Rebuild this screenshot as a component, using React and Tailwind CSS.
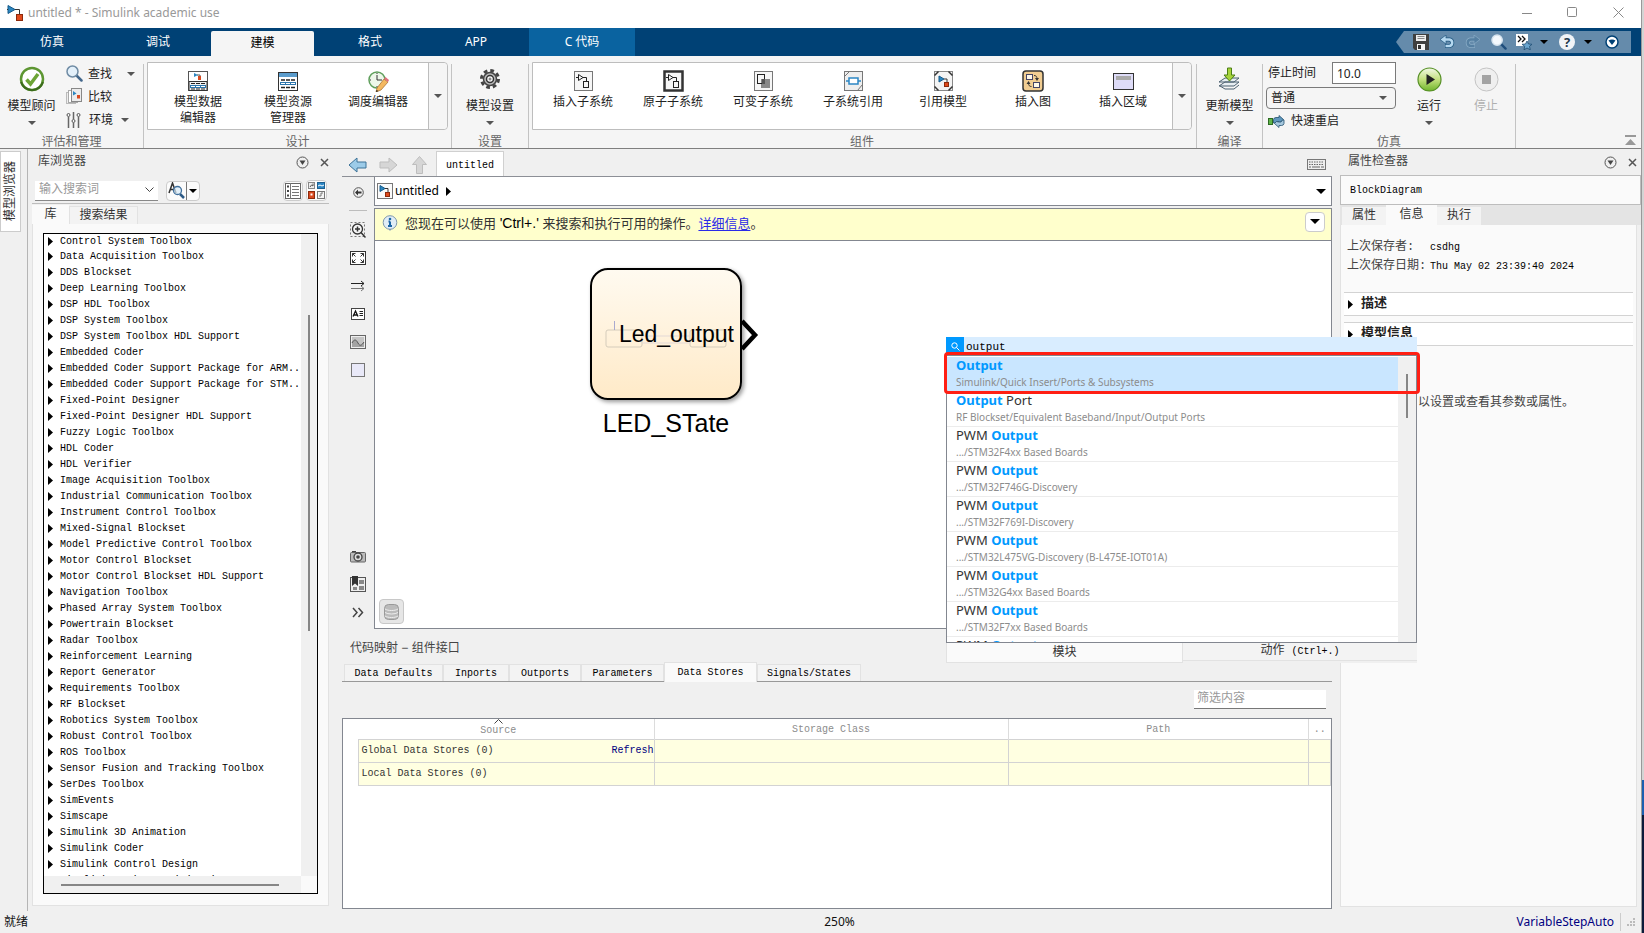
import { useState } from 'react';
import { clsx } from 'clsx';

const ribbonTabs = [
  { label: '仿真' },
  { label: '调试' },
  { label: '建模' },
  { label: '格式' },
  { label: 'APP' },
  { label: 'C 代码', context: true },
];

const toolboxes = [
  'Control System Toolbox',
  'Data Acquisition Toolbox',
  'DDS Blockset',
  'Deep Learning Toolbox',
  'DSP HDL Toolbox',
  'DSP System Toolbox',
  'DSP System Toolbox HDL Support',
  'Embedded Coder',
  'Embedded Coder Support Package for ARM..',
  'Embedded Coder Support Package for STM..',
  'Fixed-Point Designer',
  'Fixed-Point Designer HDL Support',
  'Fuzzy Logic Toolbox',
  'HDL Coder',
  'HDL Verifier',
  'Image Acquisition Toolbox',
  'Industrial Communication Toolbox',
  'Instrument Control Toolbox',
  'Mixed-Signal Blockset',
  'Model Predictive Control Toolbox',
  'Motor Control Blockset',
  'Motor Control Blockset HDL Support',
  'Navigation Toolbox',
  'Phased Array System Toolbox',
  'Powertrain Blockset',
  'Radar Toolbox',
  'Reinforcement Learning',
  'Report Generator',
  'Requirements Toolbox',
  'RF Blockset',
  'Robotics System Toolbox',
  'Robust Control Toolbox',
  'ROS Toolbox',
  'Sensor Fusion and Tracking Toolbox',
  'SerDes Toolbox',
  'SimEvents',
  'Simscape',
  'Simulink 3D Animation',
  'Simulink Coder',
  'Simulink Control Design',
  'Simulink Design Optimization',
];

const mappingTabs = [
  { label: 'Data Defaults', width: 'w-[99px]' },
  { label: 'Inports', width: 'w-[66px]' },
  { label: 'Outports', width: 'w-[72px]' },
  { label: 'Parameters', width: 'w-[83px]' },
  { label: 'Data Stores', width: 'w-[93px]' },
  { label: 'Signals/States', width: 'w-[104px]' },
];

const results = [
  { pre: '', post: '', path: 'Simulink/Quick Insert/Ports & Subsystems' },
  { pre: '', post: ' Port', path: 'RF Blockset/Equivalent Baseband/Input/Output Ports' },
  { pre: 'PWM ', post: '', path: '.../STM32F4xx Based Boards' },
  { pre: 'PWM ', post: '', path: '.../STM32F746G-Discovery' },
  { pre: 'PWM ', post: '', path: '.../STM32F769I-Discovery' },
  { pre: 'PWM ', post: '', path: '.../STM32L475VG-Discovery (B-L475E-IOT01A)' },
  { pre: 'PWM ', post: '', path: '.../STM32G4xx Based Boards' },
  { pre: 'PWM ', post: '', path: '.../STM32F7xx Based Boards' },
  { pre: 'PWM ', post: '', path: '' },
];

/* ---------- icons ---------- */

function Svg({ w = 20, h = w, children, className }) {
  return (
    <svg width={w} height={h} viewBox={`0 0 ${w} ${h}`} fill="none" className={clsx('shrink-0', className)} aria-hidden="true">
      {children}
    </svg>
  );
}

const Caret = ({ color = '#555', className }) => (
  <Svg w={8} h={4} className={className}>
    <path d="M0 0h8L4 4z" fill={color} />
  </Svg>
);

const BigCaret = ({ color = '#000' }) => (
  <Svg w={10} h={5}>
    <path d="M0 0h10L5 5z" fill={color} />
  </Svg>
);

const TreeArrow = ({ className }) => (
  <Svg w={5} h={9} className={className}>
    <path d="M0 0l5 4.500L0 9z" fill="#000" />
  </Svg>
);

const ModelIcon = () => (
  <Svg w={16}>
    <path d="M1 .5v8l7-4z" fill="#2b86c0" stroke="#155a8a" />
    <path d="M0 4.500h1M8 4.500h4.500v5" stroke="#333" />
    <rect x="9.500" y="9.500" width="6" height="6" fill="#e04a1c" stroke="#8c2a0c" />
  </Svg>
);

const SquareModelIcon = () => (
  <Svg w={16}>
    <rect x=".5" y=".5" width="15" height="15" fill="#fafafa" stroke="#777" />
    <path d="M3 2.500v6l5-3z" fill="#2b86c0" stroke="#155a8a" />
    <path d="M8 5.500h3v4" stroke="#333" />
    <rect x="8.500" y="9.500" width="4" height="4" fill="#e04a1c" stroke="#8c2a0c" />
  </Svg>
);

const CheckIcon = () => (
  <Svg w={26}>
    <circle cx="13" cy="13" r="11" fill="#fff" stroke="#5d9632" strokeWidth="2.500" />
    <path d="M2 16a11.500 11.500 0 0 0 22 0" stroke="#3b6b1c" strokeWidth="2" />
    <path d="M7.500 13.500l4 4.500 7.500-10" stroke="#6da536" strokeWidth="3.500" />
  </Svg>
);

const SearchIcon = ({ w = 17, light }) => (
  <svg width={w} height={w} viewBox="0 0 17 17" fill="none" className="shrink-0" aria-hidden="true">
    <path d="M10.500 10.500l5 5" stroke={light ? '#1f4e7c' : '#44688c'} strokeWidth="2.500" strokeLinecap="round" />
    <circle cx="6.500" cy="6.500" r="5.500" fill={light ? '#f4f9fd' : '#e3f0fa'} stroke={light ? '#d5e3ee' : '#6f8ba4'} strokeWidth="1.500" />
  </svg>
);

const CompareIcon = () => (
  <Svg w={17}>
    <rect x=".5" y="4.500" width="9" height="11" fill="#eee" stroke="#bbb" />
    <rect x="2.500" y="2.500" width="9" height="12" fill="#fff" stroke="#aaa" />
    <rect x="5.500" y=".5" width="10" height="13" fill="#ececec" stroke="#888" />
    <path d="M7 3v4.500l3.500-2z" fill="#2b86c0" />
    <rect x="11" y="7" width="3" height="3.500" fill="#d9491f" />
  </Svg>
);

const SlidersIcon = () => (
  <Svg w={15} h={16}>
    <path d="M2.500 5v11M7.500 0v7M7.500 11v5M12.500 5v11" stroke="#666" strokeWidth="1.500" />
    <circle cx="2.500" cy="3" r="1.500" stroke="#555" />
    <circle cx="7.500" cy="9" r="1.500" stroke="#555" />
    <circle cx="12.500" cy="3" r="1.500" stroke="#555" />
  </Svg>
);

const DataEditorIcon = () => (
  <Svg w={20}>
    <rect x=".5" y=".5" width="19" height="19" fill="#fff" stroke="#555" />
    <path d="M6 2v4l4-2z" fill="#2b86c0" />
    <path d="M9 4h3v2" stroke="#555" />
    <rect x="10" y="5" width="3" height="4" fill="#d9491f" />
    <path d="M1 10.500h18v9H1z" fill="#f2f2f2" stroke="#333" />
    <path d="M2 15.500h16" stroke="#2c76ad" strokeWidth="3" />
    <path d="M3 12.500h14M3 18h14" stroke="#222" strokeDasharray="4 1" />
    <path d="M3 15.500h14" stroke="#fff" strokeDasharray="4 1" />
  </Svg>
);

const ExplorerIcon = () => (
  <Svg w={20} h={19}>
    <rect x=".5" y=".5" width="19" height="18" fill="#fff" stroke="#333" />
    <rect x="1" y="1" width="18" height="4" fill="#5b9ccc" />
    <path d="M3 8h14M3 15.500h14" stroke="#222" strokeDasharray="4 1" strokeWidth="1.500" />
    <path d="M2 11.500h16" stroke="#2c76ad" strokeWidth="3" />
    <path d="M3 11.500h14" stroke="#fff" strokeDasharray="4 1" />
  </Svg>
);

const ScheduleIcon = () => (
  <Svg w={21}>
    <circle cx="9" cy="9" r="8" fill="#eef7ea" stroke="#5f9f5c" strokeWidth="1.500" />
    <path d="M9 4v5h5M9 2v1M2 9h1M9 15v1" stroke="#333" />
    <path d="M9 17l7-9 4 3-7 8-5 2z" fill="#f4b860" stroke="#a0692a" strokeWidth=".7" />
    <path d="M16 8l4 3 1-2-3.500-3z" fill="#e0707c" />
    <path d="M8.500 19l2 1-2.500 1z" fill="#222" />
  </Svg>
);

const GearIcon = () => (
  <Svg w={20}>
    <circle cx="10" cy="10" r="8.500" stroke="#444" strokeWidth="3" strokeDasharray="3.700 2.980" />
    <circle cx="10" cy="10" r="6.500" fill="#bbb" stroke="#444" strokeWidth="1.500" />
    <circle cx="10" cy="10" r="3.500" fill="#fff" stroke="#333" strokeWidth="1.500" />
    <circle cx="10" cy="10" r="1.500" fill="#888" />
  </Svg>
);

const SubsystemIcon = ({ bold }) => (
  <Svg w={21} h={22}>
    <rect x="1.500" y="1.500" width="18" height="19" fill="#f6f6f6" stroke={bold ? '#333' : '#777'} strokeWidth={bold ? 2.5 : 1} />
    <path d="M5.500 4.500v6l4.500-3zM3 7.500h2M10 7.500h3.500v4" stroke="#222" />
    <rect x="10.500" y="11.500" width="5" height="6" stroke="#222" />
  </Svg>
);

const VariantIcon = () => (
  <Svg w={21} h={22}>
    <rect x="1.500" y="1.500" width="18" height="19" fill="#f6f6f6" stroke="#777" />
    <rect x="8" y="9" width="9" height="9" fill="#888" />
    <rect x="4.500" y="4.500" width="7" height="9" stroke="#222" />
    <rect x="9" y="9" width="3" height="5" fill="#555" />
  </Svg>
);

const SubRefIcon = () => (
  <Svg w={21} h={22}>
    <rect x="1.500" y="1.500" width="18" height="19" fill="#eee" stroke="#777" />
    <path d="M1.500 6.500l5-5M14.500 20.500l5-6" stroke="#777" />
    <rect x="6" y="8" width="9" height="6" fill="#fff" stroke="#2c86c4" strokeWidth="1.500" />
    <path d="M3 11h3M15 11h3" stroke="#2c86c4" strokeWidth="1.500" />
  </Svg>
);

const ModelRefIcon = () => (
  <Svg w={21} h={22}>
    <rect x="1.500" y="1.500" width="18" height="19" fill="#f4f4f4" stroke="#888" />
    <path d="M1.500 5.500l4-4M15.500 1.500l4 4M1.500 16.500l4 4M15.500 20.500l4-4" stroke="#333" strokeWidth="1.500" />
    <path d="M6 6v6l5-3z" fill="#2b86c0" stroke="#155a8a" />
    <path d="M11 9h3v3" stroke="#333" />
    <rect x="11.500" y="12.500" width="4" height="4" fill="#e04a1c" stroke="#8c2a0c" />
  </Svg>
);

const ChartIcon = () => (
  <Svg w={22}>
    <rect x="1" y="1" width="20" height="20" rx="3" fill="#f1cd92" stroke="#333" strokeWidth="1.500" />
    <rect x="4.500" y="4.500" width="6" height="5" fill="#fff8e8" stroke="#446" />
    <rect x="11.500" y="12.500" width="6" height="5" fill="#fff8e8" stroke="#446" />
    <path d="M12 5.500c2 0 3 1 3 3.500M9.500 16.500c-2 0-3-1-3-3.500" stroke="#333" />
    <path d="M13 8h4l-2 3zM4.500 14h4l-2-3z" fill="#333" />
  </Svg>
);

const AreaIcon = () => (
  <Svg w={21} h={19}>
    <rect x=".5" y="1.500" width="20" height="16" fill="#dedcf8" stroke="#333" />
    <rect x="3" y="4" width="15" height="4" fill="#aaa" />
  </Svg>
);

const UpdateIcon = () => (
  <Svg w={23} h={24}>
    <path d="M1 19l6-4h14l-5 4zM1 15l6-4h14l-5 4z" fill="#e8eef2" stroke="#4b6070" />
    <path d="M2 19l5 3h9l5-4" stroke="#4b6070" />
    <path d="M9.500 1h4v7h3.500l-5.500 6L6 8h3.500z" fill="#a6d33c" stroke="#4c7f14" />
  </Svg>
);

const RestartIcon = () => (
  <Svg w={17} h={13}>
    <rect x=".5" y="3.500" width="4" height="6" fill="#5fb548" stroke="#2d6a22" />
    <path d="M5.500 8V4.500a2.500 2.500 0 0 1 2.500-2h3V.5l4.500 4-4.500 4v-2H8.500V8z" fill="#5f97bd" stroke="#24516f" strokeWidth=".8" />
    <path d="M16 5v3.500a2.500 2.500 0 0 1-2.500 2h-2.500v2l-4.500-4 2-2 2.500.5 2 0 1.500-2z" fill="#a6c8de" stroke="#24516f" strokeWidth=".8" />
  </Svg>
);

const RunIcon = () => (
  <Svg w={25}>
    <defs>
      <linearGradient id="run" x1="0" y1="0" x2="0" y2="1">
        <stop offset="0" stopColor="#f2f8e6" />
        <stop offset=".5" stopColor="#c3e07e" />
        <stop offset="1" stopColor="#6fb52c" />
      </linearGradient>
    </defs>
    <circle cx="12.500" cy="12.500" r="11.500" fill="url(#run)" stroke="#558f25" strokeWidth="1.200" />
    <path d="M9.500 7v11l8.500-5.500z" fill="#222" />
  </Svg>
);

const StopIcon = () => (
  <Svg w={25}>
    <circle cx="12.500" cy="12.500" r="11.500" fill="#efefef" stroke="#c4c4c4" />
    <rect x="8" y="8" width="9" height="9" fill="#a3a3a3" />
  </Svg>
);

const CircleDown = () => (
  <Svg w={13}>
    <circle cx="6.500" cy="6.500" r="5.500" stroke="#555" />
    <path d="M3.500 4.500h6l-3 4.500z" fill="#444" />
  </Svg>
);

const CrossIcon = () => (
  <Svg w={9}>
    <path d="M1 1l7 7M8 1L1 8" stroke="#555" strokeWidth="1.500" />
  </Svg>
);

const BlockArrow = ({ dir, active }) => (
  <svg width="19" height="16" viewBox="0 0 19 16" className={clsx('shrink-0', dir === 'right' && 'rotate-180', dir === 'up' && 'rotate-90')} aria-hidden="true">
    <path d="M1 8l8-7v4h9v6H9v4z" fill={active ? '#9ccbe8' : '#d6d6d6'} stroke={active ? '#3c7298' : '#bdbdbd'} />
  </svg>
);

const KeyboardIcon = () => (
  <Svg w={19} h={11}>
    <rect x=".5" y=".5" width="18" height="10" fill="#eee" stroke="#777" />
    <path d="M2 3h15M2 5.500h15" stroke="#666" strokeDasharray="1.500 1" />
    <path d="M2 8h2M5 8h8M14 8h3" stroke="#666" />
  </Svg>
);

const FindIcon = () => (
  <Svg w={17} h={17}>
    <path d="M1 11L4.500 1 8 11M2 7.500h5" stroke="#333" strokeWidth="1.500" />
    <path d="M12 12l4 4" stroke="#2c5a86" strokeWidth="2.500" />
    <circle cx="9.500" cy="8.500" r="4" fill="#d8ebf8" fillOpacity=".7" stroke="#3f6f9c" strokeWidth="1.300" />
  </Svg>
);

const ListIcon = () => (
  <Svg w={16}>
    <rect x=".5" y=".5" width="15" height="15" fill="#fff" stroke="#666" />
    <path d="M5.500 0v16M7 3.500h7M7 6.500h7M7 9.500h7M7 12.500h7" stroke="#777" />
    <path d="M2 3.500h2M2 8h2M2 12.500h2" stroke="#444" strokeWidth="2" />
  </Svg>
);

const GridIcon = () => (
  <Svg w={17}>
    <rect x=".5" y=".5" width="6" height="6" fill="#eee" stroke="#888" />
    <path d="M2 5l1.500-2 1.500 1V1.500" stroke="#555" />
    <rect x="9.500" y=".5" width="7" height="6" fill="#2c86c4" stroke="#1d5f8f" />
    <path d="M10 4l2-1 2 1 2-1" stroke="#fff" />
    <rect x=".5" y="9.500" width="6" height="7" fill="#d9491f" stroke="#8c2a0c" />
    <rect x="2.500" y="11.500" width="2" height="2" fill="#fff" />
    <rect x="9.500" y="9.500" width="7" height="7" fill="#f4f4f4" stroke="#777" />
    <path d="M11 14h2v-3h2" stroke="#777" />
  </Svg>
);

const InfoIcon = () => (
  <Svg w={16}>
    <path d="M6 13l2 3 2-3z" fill="#7a98b4" />
    <circle cx="8" cy="7.500" r="6.800" fill="#e1edf6" stroke="#7d97ad" />
    <path d="M8 6.500V11M6 11h4M6.500 6.500H8" stroke="#1c66a6" strokeWidth="2" />
    <circle cx="8" cy="4" r="1.300" fill="#1c66a6" />
  </Svg>
);

const paletteTop = [
  {
    name: 'Zoom',
    icon: (
      <Svg w={16}>
        <rect x=".5" y=".5" width="14" height="14" stroke="#777" strokeDasharray="2 2" />
        <circle cx="7.500" cy="7" r="5" fill="#f5f5f5" stroke="#333" strokeWidth="1.300" />
        <path d="M5 7h5M7.500 4.500v5M11 10.500l4.500 5" stroke="#333" strokeWidth="1.500" />
      </Svg>
    ),
  },
  {
    name: 'Fit to view',
    icon: (
      <Svg w={16} h={14}>
        <rect x=".5" y=".5" width="15" height="13" fill="#fff" stroke="#333" />
        <path d="M2.500 5.500v-3h3M2.500 2.500l3 3M10.500 2.500h3v3M13.500 2.500l-3 3M2.500 8.500v3h3M2.500 11.500l3-3M13.500 8.500v3h-3M13.500 11.500l-3-3" stroke="#333" />
      </Svg>
    ),
  },
  {
    name: 'Signals',
    icon: (
      <Svg w={16} h={12}>
        <path d="M1 3.500h13M11 1l3 2.500L11 6" stroke="#222" />
        <path d="M1 8.500h13M11 6l3 2.500-3 2.500" stroke="#777" />
      </Svg>
    ),
  },
  {
    name: 'Annotation',
    icon: (
      <Svg w={14} h={12}>
        <rect x=".5" y=".5" width="13" height="11" fill="#fff" stroke="#444" />
        <path d="M2 8.500L4.500 3 7 8.500M3 7h3" stroke="#111" strokeWidth="1.300" />
        <path d="M8.500 3.500h3.500M8.500 5.500h3.500M8.500 7.500h3.500" stroke="#222" />
      </Svg>
    ),
  },
  {
    name: 'Image',
    icon: (
      <Svg w={16} h={14}>
        <rect x=".5" y=".5" width="15" height="13" fill="#eee" stroke="#666" />
        <rect x="2" y="2" width="12" height="10" fill="#c4c4c4" />
        <path d="M2 8c2-4 4-4 6 0s4 2 6-1v5H2z" fill="#a4a4a4" />
        <path d="M2 8c2-4 4-4 6 0s4 2 6-1" stroke="#555" />
      </Svg>
    ),
  },
  {
    name: 'Area',
    icon: (
      <Svg w={14}>
        <rect x=".5" y=".5" width="13" height="13" fill="#e9e9f8" stroke="#777" />
      </Svg>
    ),
  },
];

const paletteBottom = [
  {
    name: 'Screenshot',
    icon: (
      <Svg w={16} h={13}>
        <rect x=".5" y="2.500" width="15" height="9.500" rx="1" fill="#bbb" stroke="#666" />
        <path d="M2 1.500h4" stroke="#444" />
        <circle cx="8" cy="7" r="4" fill="#ddd" stroke="#444" strokeWidth="1.300" />
        <circle cx="8" cy="7" r="1.800" fill="#444" />
      </Svg>
    ),
  },
  {
    name: 'Viewmarks',
    icon: (
      <Svg w={16}>
        <rect x=".5" y="1.500" width="15" height="14" fill="#eee" stroke="#555" />
        <path d="M2 0h6v10L5 7.500 2 10z" fill="#333" />
        <path d="M9 4h5v4H9zM9 10h5v4H9zM3 11h4v3H3z" fill="#888" />
      </Svg>
    ),
  },
  {
    name: 'More',
    icon: (
      <Svg w={12} h={11}>
        <path d="M1 1l4 4.500L1 10M6.500 1l4 4.500-4 4.500" stroke="#444" strokeWidth="1.500" />
      </Svg>
    ),
  },
];

/* ---------- ribbon ---------- */

function TitleBar() {
  return (
    <header className="flex h-7 shrink-0 items-center bg-white pb-[3px] pl-[7px] text-xs text-[#999]">
      <ModelIcon />
      <h1 className="flex-1 pl-[5px]">untitled * - Simulink academic use</h1>
      <button aria-label="Minimize" className="flex w-11 justify-center">
        <Svg w={11}><path d="M0 6.500h10" stroke="#888" /></Svg>
      </button>
      <button aria-label="Maximize" className="flex w-[46px] justify-center">
        <Svg w={11}><rect x=".5" y=".5" width="9" height="9" rx="1" stroke="#888" /></Svg>
      </button>
      <button aria-label="Close" className="flex w-[46px] justify-center">
        <Svg w={11}><path d="M.5.5l10 10M10.500.5l-10 10" stroke="#888" /></Svg>
      </button>
    </header>
  );
}

function QuickAccess() {
  return (
    <div className="mr-[10px] flex h-[22px] items-center bg-[#658bab] pr-3 pl-[17px] [clip-path:polygon(8px_0,100%_0,100%_100%,8px_100%,0_50%)]">
      <button aria-label="Save" className="w-[27px]">
        <Svg w={16}>
          <path d="M0 0h16v16H2l-2-2z" fill="#3f3f3f" />
          <path d="M3 1h10v6H3z" fill="#eee" />
          <path d="M4.500 2.500h7M4.500 4.500h7" stroke="#888" />
          <path d="M4 10h8v6H4z" fill="#f5f5f5" />
          <path d="M5 11h3v4H5z" fill="#333" />
        </Svg>
      </button>
      <button aria-label="Undo" className="w-[25px]">
        <Svg w={15} h={14}>
          <path d="M4 4.500h5.500a3.300 3.300 0 0 1 0 6.500H5" stroke="#1f567f" strokeWidth="4" />
          <path d="M6 0v9L0 4.500z" fill="#b5d8ef" stroke="#1f567f" strokeWidth=".7" />
          <path d="M4 4.500h5.500a3.300 3.300 0 0 1 0 6.500H5.500" stroke="#b5d8ef" strokeWidth="2.500" />
        </Svg>
      </button>
      <button aria-label="Redo" className="w-[26px]">
        <Svg w={15} h={14}>
          <path d="M11 4.500H5.500a3.300 3.300 0 0 0 0 6.500H10" stroke="#8badc7" strokeWidth="4" />
          <path d="M9 0v9l6-4.500z" fill="#5680a2" stroke="#8badc7" strokeWidth=".7" />
          <path d="M11 4.500H5.500a3.300 3.300 0 0 0 0 6.500H9.500" stroke="#5680a2" strokeWidth="2.500" />
        </Svg>
      </button>
      <button aria-label="Find" className="w-[25px]">
        <SearchIcon w={16} light />
      </button>
      <button aria-label="Favorites" className="flex w-[43px] items-center gap-2">
        <Svg w={16}>
          <rect x="0" y="0" width="12" height="12" fill="#fff" />
          <path d="M2 2l3 3-3 3M6 2l3 3-3 3" stroke="#111" strokeWidth="1.300" />
          <path d="M11 7l1.500 3 3.500.3-2.500 2 .8 3.500-3.300-1.800-3 1.800.7-3.500L6 10.300l3.500-.3z" fill="#6aa6d0" stroke="#214e72" strokeWidth=".8" />
        </Svg>
        <Caret color="#000" />
      </button>
      <button aria-label="Help" className="flex w-[46px] items-center gap-[9px]">
        <span className="flex size-4 items-center justify-center rounded-full bg-[#f1f4f7] text-[13px] leading-4 font-bold text-[#24394d]">?</span>
        <Caret color="#000" />
      </button>
      <button aria-label="Options">
        <Svg w={14}>
          <circle cx="7" cy="7" r="6" fill="#fff" stroke="#004175" strokeWidth="1.500" />
          <path d="M3.500 5.500c2-1.500 5-1.500 7 0L7 10z" fill="#004175" />
        </Svg>
      </button>
    </div>
  );
}

function RibbonTabs({ active, onSelect }) {
  return (
    <nav className="flex h-7 shrink-0 items-end justify-between bg-[#004175]">
      <div className="-ml-px flex items-end">
        {ribbonTabs.map((t) => (
          <button
            key={t.label}
            onClick={() => onSelect(t.label)}
            className={clsx(
              'text-center text-xs',
              active === t.label ? 'mr-[3px] h-[25px] w-[103px] rounded-t-xs bg-[#f5f5f5] pb-[2px] text-black' : 'h-7 w-[106px] text-white',
              t.context && 'bg-[#0a63a0]',
            )}
          >
            {t.label}
          </button>
        ))}
      </div>
      <div className="flex h-7 items-center">
        <QuickAccess />
      </div>
    </nav>
  );
}

function Section({ title, className, children }) {
  return (
    <section className={clsx('mt-2 flex h-[84px] shrink-0 flex-col justify-between border-r border-[#c3c3c3]', className)}>
      <div className="-mt-2 flex h-[75px] pt-[6px]">{children}</div>
      <h2 className="text-center text-xs leading-3 text-[#666]">{title}</h2>
    </section>
  );
}

function BigButton({ icon, label, caret, disabled, className }) {
  return (
    <button disabled={disabled} className={clsx('flex shrink-0 flex-col items-center justify-start pt-[3px] text-xs', className)}>
      <span className="flex h-7 items-center justify-center">{icon}</span>
      <span className={clsx('mt-[5px] leading-4', disabled ? 'text-[#b0b0b0]' : 'text-[#222]')}>{label}</span>
      {caret && <Caret className="mt-[7px]" />}
    </button>
  );
}

function GalleryItem({ icon, lines }) {
  return (
    <button className="flex w-[90px] shrink-0 flex-col items-center justify-start pt-[7px] text-xs leading-4 text-[#222]">
      <span className="flex h-[22px] items-center">{icon}</span>
      <span className="pt-[2px]">
        {lines.map((l) => (
          <span key={l} className="block">{l}</span>
        ))}
      </span>
    </button>
  );
}

function Gallery({ children }) {
  return (
    <div className="flex h-[68px] flex-1 rounded-r-sm border border-[#bdbdbd] bg-white">
      <div className="flex flex-1 pl-[5px]">{children}</div>
      <button aria-label="Show more" className="flex w-[19px] items-center justify-center rounded-r-sm border-l border-[#bdbdbd] bg-[#f5f5f5]">
        <Caret />
      </button>
    </div>
  );
}

function Ribbon() {
  return (
    <div className="flex h-[93px] shrink-0 border-b border-[#7f7f7f] bg-[#f5f5f5]">
      <Section title="评估和管理" className="w-[144px]">
        <BigButton icon={<CheckIcon />} label="模型顾问" caret className="w-[63px]" />
        <div className="flex flex-1 flex-col text-xs text-[#222]">
          <button className="flex h-6 items-center gap-[5px] pl-[3px]">
            <SearchIcon />
            查找
            <Caret className="ml-[10px]" />
          </button>
          <button className="flex h-6 items-center gap-[5px] pl-[3px]">
            <CompareIcon />
            比较
          </button>
          <button className="flex h-6 items-center gap-2 pl-[3px]">
            <SlidersIcon />
            环境
            <Caret />
          </button>
        </div>
      </Section>
      <Section title="设计" className="w-[308px] pr-[3px] pl-[3px]">
        <Gallery>
          <GalleryItem icon={<DataEditorIcon />} lines={['模型数据', '编辑器']} />
          <GalleryItem icon={<ExplorerIcon />} lines={['模型资源', '管理器']} />
          <GalleryItem icon={<ScheduleIcon />} lines={['调度编辑器']} />
        </Gallery>
      </Section>
      <Section title="设置" className="w-[77px]">
        <BigButton icon={<GearIcon />} label="模型设置" caret className="w-full" />
      </Section>
      <Section title="组件" className="w-[668px] pr-[4px] pl-[3px]">
        <Gallery>
          <GalleryItem icon={<SubsystemIcon />} lines={['插入子系统']} />
          <GalleryItem icon={<SubsystemIcon bold />} lines={['原子子系统']} />
          <GalleryItem icon={<VariantIcon />} lines={['可变子系统']} />
          <GalleryItem icon={<SubRefIcon />} lines={['子系统引用']} />
          <GalleryItem icon={<ModelRefIcon />} lines={['引用模型']} />
          <GalleryItem icon={<ChartIcon />} lines={['插入图']} />
          <GalleryItem icon={<AreaIcon />} lines={['插入区域']} />
        </Gallery>
      </Section>
      <Section title="编译" className="w-[66px]">
        <BigButton icon={<UpdateIcon />} label="更新模型" caret className="w-full" />
      </Section>
      <Section title="仿真" className="w-[253px]">
        <div className="flex w-[135px] flex-col pl-[3px] text-xs text-[#222]">
          <div className="flex h-[22px] items-center justify-between">
            <label htmlFor="stop-time" className="pl-[2px]">停止时间</label>
            <input id="stop-time" defaultValue="10.0" className="h-[22px] w-16 border border-[#7a7a7a] bg-white px-1 text-xs" />
          </div>
          <div className="relative mt-[3px] flex items-center">
            <select aria-label="仿真模式" className="h-[22px] w-full appearance-none rounded-sm border border-[#7a7a7a] bg-[#f5f5f5] px-1">
              <option>普通</option>
            </select>
            <Caret className="pointer-events-none absolute right-[9px]" />
          </div>
          <button className="mt-[2px] flex h-[26px] items-center gap-[6px] pl-[2px]">
            <RestartIcon />
            快速重启
          </button>
        </div>
        <BigButton icon={<RunIcon />} label="运行" caret className="ml-[5px] w-[56px]" />
        <BigButton icon={<StopIcon />} label="停止" disabled className="w-[58px]" />
      </Section>
      <div className="flex flex-1 items-end justify-end pr-[5px] pb-[3px]">
        <button aria-label="Collapse">
          <Svg w={11} h={10}><path d="M0 0h11v2H0zM0 10h11L5.500 4z" fill="#999" /></Svg>
        </button>
      </div>
    </div>
  );
}

/* ---------- side panels ---------- */

function PanelTitle({ children, className }) {
  return (
    <div className={clsx('flex h-[26px] shrink-0 items-center gap-[11px] text-xs text-[#444]', className)}>
      <h2 className="flex-1">{children}</h2>
      <button aria-label="Panel menu"><CircleDown /></button>
      <button aria-label="Close panel"><CrossIcon /></button>
    </div>
  );
}

function LibraryBrowser() {
  return (
    <aside className="flex w-[301px] shrink-0 flex-col pb-[5px] pl-1">
      <PanelTitle className="pl-[6px]">库浏览器</PanelTitle>
      <div className="mt-[2px] flex h-[27px] shrink-0 items-center border-b border-[#bdbdbd] pt-px pr-[2px] pl-[3px]">
        <div className="flex h-5 w-[123px] items-center border-b border-[#888] bg-white pr-1">
          <input aria-label="输入搜索词" placeholder="输入搜索词" className="w-full min-w-0 px-1 text-xs placeholder:text-[#999]" />
          <Svg w={9} h={6}><path d="M.5.5l4 4 4-4" stroke="#444" /></Svg>
        </div>
        <div className="ml-2 flex h-5 items-center rounded-sm border border-[#ccc] bg-[#fbfbfb]">
          <button aria-label="Search options" className="px-px"><FindIcon /></button>
          <button aria-label="Search menu" className="flex h-full items-center border-l border-[#777] px-[2px]"><Caret color="#000" /></button>
        </div>
        <button aria-label="List view" className="ml-auto rounded-sm border border-[#ccc] bg-[#fbfbfb] p-px"><ListIcon /></button>
        <button aria-label="Grid view" className="ml-[3px] rounded-sm border border-[#ccc] bg-[#fbfbfb] p-px"><GridIcon /></button>
      </div>
      <div className="flex h-5 shrink-0 items-end text-xs text-[#333]">
        <button className="h-[19px] w-[37px] bg-[#fafafa]">库</button>
        <button className="h-[18px] w-[69px] border border-b-0 border-[#e2e2e2] bg-[#f3f3f3]">搜索结果</button>
      </div>
      <div className="flex min-h-0 flex-1 flex-col border border-t-0 border-[#e2e2e2] bg-[#fafafa] px-[10px] pt-[9px] pb-[11px]">
        <div className="flex min-h-0 flex-1 flex-col border border-black bg-white">
          <div className="flex min-h-0 flex-1">
            <ul className="min-h-0 flex-1 overflow-hidden">
              {toolboxes.map((t) => (
                <li key={t} className="flex h-4 items-center gap-[7px] overflow-hidden pl-1 text-[10px] leading-4 whitespace-nowrap first:h-[15px]">
                  <TreeArrow className="mb-px" />
                  {t}
                </li>
              ))}
            </ul>
            <div className="flex w-4 justify-center bg-[#f0f0f0]">
              <div className="mt-[81px] h-[316px] w-[2px] bg-[#868686]" />
            </div>
          </div>
          <div className="flex h-[17px] shrink-0 items-center">
            <div className="flex h-full flex-1 items-center bg-[#f0f0f0] pl-[17px]">
              <div className="h-[2px] w-[218px] bg-[#868686]" />
            </div>
            <div className="h-full w-4 bg-[#fafafa]" />
          </div>
        </div>
      </div>
    </aside>
  );
}

function InfoSection({ title }) {
  return (
    <button className="flex h-6 w-full items-center gap-2 border-y border-[#d3d3d3] bg-white pl-1 text-[13px] font-bold text-[#222]">
      <TreeArrow />
      {title}
    </button>
  );
}

function PropertyInspector() {
  return (
    <aside className="flex w-[301px] shrink-0 flex-col pb-1">
      <PanelTitle className="pr-1 pl-2">属性检查器</PanelTitle>
      <div className="flex h-[30px] shrink-0 items-center border border-[#bdbdbd] bg-[#fafafa] pl-[9px] text-[10px]">BlockDiagram</div>
      <div className="flex h-5 shrink-0 items-end bg-[#e4e4e4] pl-[2px] text-xs text-[#333]">
        <button className="h-[18px] w-11 bg-[#f3f3f3]">属性</button>
        <button className="h-5 w-[51px] bg-[#fafafa]">信息</button>
        <button className="h-[18px] w-11 bg-[#f3f3f3]">执行</button>
      </div>
      <div className="mr-1 flex-1 border border-t-0 border-[#e2e2e2] bg-[#fafafa] px-[3px] pt-[13px]">
        <dl className="grid grid-cols-[83px_1fr] pl-[3px] text-[10px] leading-[19px]">
          <dt className="text-xs leading-[19px] whitespace-nowrap text-[#444]">上次保存者:</dt>
          <dd>csdhg</dd>
          <dt className="text-xs leading-[19px] whitespace-nowrap text-[#444]">上次保存日期:</dt>
          <dd>Thu May 02 23:39:40 2024</dd>
        </dl>
        <div className="mt-4 flex flex-col gap-[6px]">
          <InfoSection title="描述" />
          <InfoSection title="模型信息" />
        </div>
        <p className="mt-[49px] pr-[59px] text-right text-xs text-[#444]">以设置或查看其参数或属性。</p>
      </div>
    </aside>
  );
}

/* ---------- editor ---------- */

function Palette() {
  return (
    <div className="flex w-8 shrink-0 flex-col items-center pb-[3px]">
      <button aria-label="Hide browser" className="flex h-[30px] items-center">
        <Svg w={11}>
          <circle cx="5.500" cy="5.500" r="4.800" stroke="#555" />
          <path d="M2 5.500l3-3v2h3.500v2H5v2z" fill="#333" />
        </Svg>
      </button>
      <div className="mt-[3px] mb-[5px] h-px w-[18px] bg-[#bdbdbd]" />
      {paletteTop.map((p) => (
        <button key={p.name} aria-label={p.name} className="flex h-7 items-center">{p.icon}</button>
      ))}
      <div className="flex-1" />
      {paletteBottom.map((p) => (
        <button key={p.name} aria-label={p.name} className="flex h-7 items-center">{p.icon}</button>
      ))}
    </div>
  );
}

function ModelBlock() {
  return (
    <figure className="absolute top-[27px] left-[215px] flex flex-col items-center font-[Arial,'Liberation_Sans',sans-serif] text-black">
      <div className="relative flex h-[132px] w-[152px] items-center justify-end rounded-[18px] border-2 border-black bg-linear-to-b from-[#fffaf0] to-[#ffeac8] pr-[6px] shadow-[2px_2px_4px_rgba(0,0,0,0.4)]">
        <Svg w={122} h={28} className="absolute top-[50px] left-[13px]">
          <rect x="1" y="10" width="36" height="17" rx="2" stroke="#d5ccbb" />
          <rect x="85" y="10" width="36" height="17" rx="2" stroke="#d5ccbb" />
          <path d="M37 16h48M37 23h48" stroke="#e3d9d6" />
          <path d="M9.500 1v9" stroke="#a9a9cf" />
        </Svg>
        <span className="relative text-[23px] leading-7">Led_output</span>
        <Svg w={18} h={32} className="absolute top-[49px] left-[149px]">
          <path d="M1 2l13 14L1 30" stroke="#000" strokeWidth="4.500" />
        </Svg>
      </div>
      <figcaption className="mt-[9px] text-[25px] leading-7">LED_STate</figcaption>
    </figure>
  );
}

function Editor() {
  return (
    <div className="flex min-h-0 flex-1 flex-col">
      <div className="flex h-7 shrink-0 items-end border-b border-[#8c8f96] pl-[6px]">
        <div className="flex h-[22px] items-center gap-3 pr-[7px]">
          <button aria-label="Back"><BlockArrow active /></button>
          <button aria-label="Forward"><BlockArrow dir="right" /></button>
          <button aria-label="Up"><BlockArrow dir="up" /></button>
        </div>
        <button className="h-[25px] w-[68px] border border-b-0 border-[#d0d0d0] bg-white pt-[2px] text-[10px]">untitled</button>
        <button aria-label="Keyboard" className="mr-[6px] mb-[6px] ml-auto"><KeyboardIcon /></button>
      </div>
      <div className="flex min-h-0 flex-1">
        <Palette />
        <div className="flex min-w-0 flex-1 flex-col">
          <div className="flex h-[29px] shrink-0 items-center border border-t-0 border-[#838790] bg-white pr-[5px] pl-[2px]">
            <SquareModelIcon />
            <span className="pr-[7px] pl-[2px] font-['Noto_Sans','Noto_Sans_CJK_SC',sans-serif] text-xs">untitled</span>
            <TreeArrow />
            <button aria-label="History" className="ml-auto"><BigCaret /></button>
          </div>
          <div className="mt-[2px] flex h-[33px] shrink-0 items-center border border-[#838790] bg-[#ffffcc] pr-[6px] pb-[3px] pl-[7px] text-[13px] leading-5 text-[#333]">
            <InfoIcon />
            <p className="flex-1 pl-[7px] font-['Liberation_Sans','Noto_Sans_CJK_SC',sans-serif]">
              您现在可以使用 <span className="text-[14px] text-black">'Ctrl+.'</span> 来搜索和执行可用的操作。
              <a href="#details" className="text-[#2a2ae8] underline underline-offset-2">详细信息</a>。
            </p>
            <button aria-label="Dismiss" className="mb-[3px] flex size-5 items-center justify-center rounded-sm border border-[#ccc] bg-white"><BigCaret /></button>
          </div>
          <div className="relative min-h-0 flex-1 border border-t-0 border-[#838790] bg-white">
            <ModelBlock />
            <button aria-label="Data" className="absolute bottom-1 left-1 flex size-[25px] items-center justify-center rounded-sm border border-[#c8c8c8] bg-[#e6e6e6]">
              <Svg w={15} h={16}>
                <rect x=".5" y=".5" width="14" height="15" rx="4" fill="#bbb" stroke="#999" />
                <path d="M1 5c3 2 10 2 13 0M1 8.500c3 2 10 2 13 0M1 12c3 2 10 2 13 0" stroke="#eee" />
              </Svg>
            </button>
          </div>
        </div>
      </div>
    </div>
  );
}

function CodeMappings() {
  const [tab, setTab] = useState('Data Stores');
  return (
    <section className="flex h-[280px] shrink-0 flex-col">
      <h2 className="pt-[10px] pl-2 text-xs leading-[18px] text-[#444]">
        代码映射<span className="font-['Liberation_Sans',sans-serif]"> − </span>组件接口
      </h2>
      <div className="mt-1 flex h-5 shrink-0 items-end border-b border-[#999] pl-[2px] text-[10px]">
        {mappingTabs.map((t) => (
          <button
            key={t.label}
            onClick={() => setTab(t.label)}
            className={clsx(
              'border border-b-0 border-[#e2e2e2]',
              t.width,
              tab === t.label ? '-mb-px h-5 bg-[#fafafa]' : 'h-[17px] bg-[#f3f3f3] pt-px',
            )}
          >
            {t.label}
          </button>
        ))}
      </div>
      <div className="flex h-9 shrink-0 items-center justify-end pr-[6px] pb-[2px]">
        <input aria-label="筛选内容" placeholder="筛选内容" className="h-[19px] w-[132px] border-b border-[#777] bg-white px-[3px] text-xs placeholder:text-[#999]" />
      </div>
      <div className="flex-1 border border-[#838790] bg-white">
        <table className="w-full table-fixed border-collapse text-[10px] text-[#333]">
          <colgroup>
            <col className="w-[15px]" />
            <col className="w-[296px]" />
            <col className="w-[354px]" />
            <col />
            <col className="w-[22px]" />
          </colgroup>
          <thead>
            <tr className="h-5 text-[#8c8c8c]">
              <th colSpan={2} scope="col" className="border-r border-[#dcdcdc] p-0 font-normal">
                <span className="flex flex-col items-center">
                  <Svg w={9} h={5}><path d="M.5 4.500l4-4 4 4" stroke="#444" /></Svg>
                  <span className="leading-[14px]">Source</span>
                </span>
              </th>
              <th scope="col" className="border-r border-[#dcdcdc] p-0 pt-[2px] font-normal">Storage Class</th>
              <th scope="col" className="border-r border-[#dcdcdc] p-0 pt-[2px] font-normal">Path</th>
              <th scope="col" className="p-0 pt-[2px] font-normal">..</th>
            </tr>
          </thead>
          <tbody>
            {['Global Data Stores (0)', 'Local Data Stores (0)'].map((name, i) => (
              <tr key={name} className="h-[23px]">
                <td />
                <td className="border border-[#d3d3d3] bg-[#ffffe1] p-0 pl-[3px]">
                  <span className="flex justify-between">
                    {name}
                    {i === 0 && <a href="#refresh" className="text-[#000080]">Refresh</a>}
                  </span>
                </td>
                <td className="border border-[#d3d3d3] bg-[#ffffe1]" />
                <td className="border border-[#d3d3d3] bg-[#ffffe1]" />
                <td className="border border-[#d3d3d3] bg-[#ffffe1]" />
              </tr>
            ))}
          </tbody>
        </table>
      </div>
    </section>
  );
}

function QuickInsert() {
  const [query, setQuery] = useState('output');
  return (
    <div className="absolute top-[188px] left-[946px] w-[471px]">
      <div className="flex h-[18px] items-center bg-[#d9edff]">
        <span className="flex h-full w-[18px] items-center justify-center bg-[#0099ff]">
          <Svg w={9}><path d="M5.500 5.500l3 3" stroke="#fff" /><circle cx="3.500" cy="3.500" r="2.700" stroke="#fff" /></Svg>
        </span>
        <input
          aria-label="Quick insert"
          value={query}
          onChange={(e) => setQuery(e.target.value)}
          className="h-full flex-1 px-[2px] pt-[2px] text-[11px]"
        />
      </div>
      <div className="flex h-[288px] border border-[#838790] bg-white pt-px">
        <ul className="flex-1 overflow-hidden font-['Noto_Sans',sans-serif]">
          {results.map((r, i) => (
            <li
              key={i}
              className={clsx('h-[35px] border-b border-[#ececec] pl-[9px]', i === 0 && 'bg-[#c9e6ff]')}
            >
              <div className="text-[13px] leading-4 text-[#333]">
                {r.pre}
                <b className="text-[#0099ff]">Output</b>
                {r.post}
              </div>
              <div className="text-[10px] leading-[18px] text-[#8c8c8c]">{r.path}</div>
            </li>
          ))}
        </ul>
        <div className="flex w-[18px] justify-center bg-[#f0f0f0]">
          <div className="mt-[17px] h-11 w-[2px] bg-[#868686]" />
        </div>
      </div>
      <div className="flex h-5 bg-[#f0f0f0] text-xs text-[#333]">
        <button className="w-[237px] border border-t-0 border-[#e2e2e2] bg-[#fafafa] leading-[18px]">模块</button>
        <button className="h-[18px] flex-1 border-b border-[#e2e2e2] bg-[#f3f3f3] leading-[17px]">
          动作 <span className="text-[10px] text-black">(Ctrl+.)</span>
        </button>
      </div>
      {/* highlight round the first hit */}
      <div className="pointer-events-none absolute top-[15px] -right-[3px] -left-[2px] h-[42px] rounded-sm border-[3px] border-[#ff1f14]" />
    </div>
  );
}

export default function App() {
  const [tab, setTab] = useState('建模');

  return (
    <div className="flex h-screen overflow-hidden bg-[#f0f0f0] font-['Noto_Sans','Noto_Sans_CJK_SC',sans-serif]">
      <div className="flex min-w-0 flex-1 flex-col">
        <TitleBar />
        <RibbonTabs active={tab} onSelect={setTab} />
        <Ribbon />
        <main className="relative flex min-h-0 flex-1 font-['Liberation_Mono','Noto_Sans_CJK_SC',monospace]">
          <div className="w-7 shrink-0 border-r border-[#b5b5b5] pt-[2px]">
            <button className="flex h-[81px] w-[21px] items-center justify-center border border-[#ccc] bg-white text-xs leading-4 text-[#333]">
              <span className="rotate-180 [text-orientation:sideways] [writing-mode:vertical-rl]">模型浏览器</span>
            </button>
          </div>
          <LibraryBrowser />
          <div className="flex min-w-0 flex-1 flex-col pr-2 pb-[2px] pl-[13px]">
            <Editor />
            <CodeMappings />
          </div>
          <PropertyInspector />
          <QuickInsert />
        </main>
        <footer className="flex h-[22px] shrink-0 items-center justify-between pr-[6px] pl-1 text-xs text-[#111]">
          <span className="flex-1">就绪</span>
          <span className="pl-10">250%</span>
          <span className="flex flex-1 items-center justify-end gap-[6px]">
            <a href="#solver" className="text-[#000080]">VariableStepAuto</a>
            <span className="h-[18px] w-px bg-[#ccc]" />
            <Svg w={8}><path d="M6 0h2v2H6zM3 3h2v2H3zM6 3h2v2H6zM0 6h2v2H0zM3 6h2v2H3zM6 6h2v2H6z" fill="#bbb" /></Svg>
          </span>
        </footer>
      </div>
      <div className="flex w-[3px] shrink-0 flex-col border-l border-[#999] bg-[#d4d4d4]">
        <div className="mt-auto h-[35px] bg-[#1c5fb0]" />
        <div className="h-[118px] bg-[#0b1a3a]" />
      </div>
    </div>
  );
}
